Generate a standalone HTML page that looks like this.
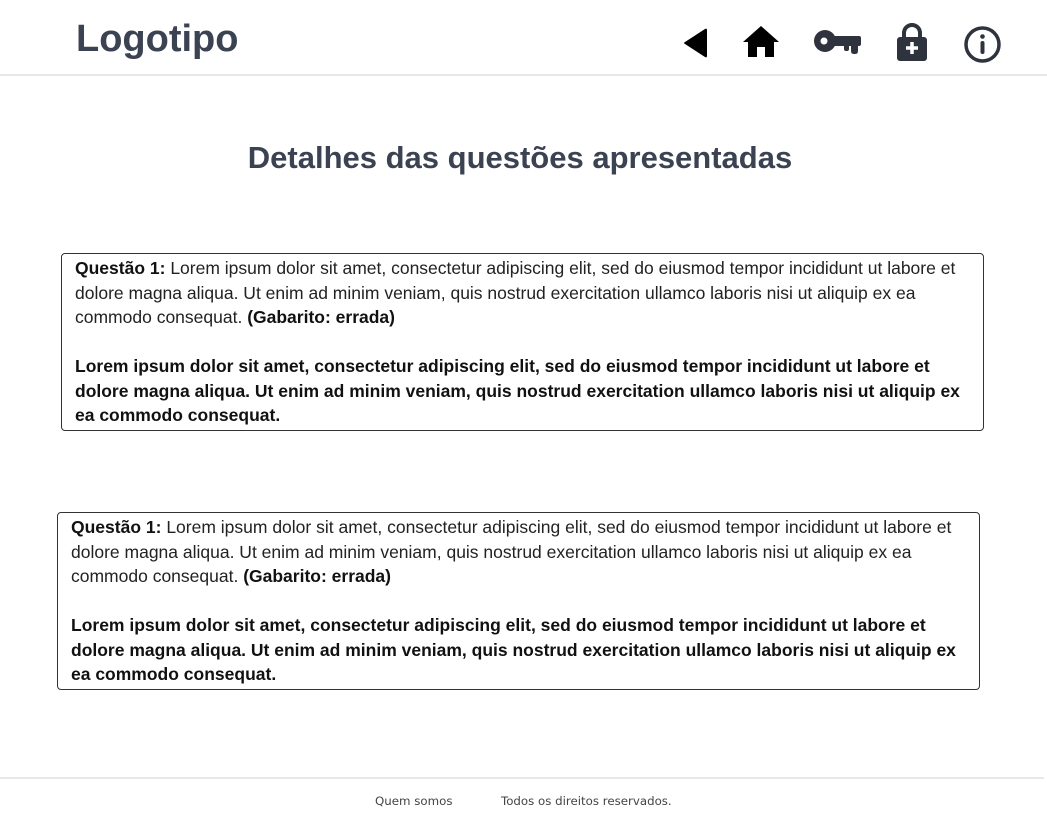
<!DOCTYPE html>
<html><head><meta charset="utf-8"><style>
*{margin:0;padding:0;box-sizing:border-box}
body{width:1047px;height:823px;background:#fff;font-family:"Liberation Sans",sans-serif;position:relative;overflow:hidden;color:#222}
.logo{position:absolute;left:76px;top:18px;font-size:38px;font-weight:bold;color:#3b4252;font-family:"Liberation Sans",sans-serif}
.hl{position:absolute;left:0;top:74px;width:1047px;height:2px;background:#e8e8e8}
.title{position:absolute;left:0;width:1040px;top:140px;text-align:center;font-size:31px;font-weight:bold;color:#3b4252;font-family:"Liberation Sans",sans-serif}
.box{position:absolute;width:923px;height:178px;border:1px solid #333;border-radius:4px;padding:2px 13px;font-size:17.5px;line-height:24.5px;color:#222;font-family:"Liberation Sans",sans-serif}
.box b{color:#111}
.icon{position:absolute}
.fl{position:absolute;left:0;top:777px;width:1044px;height:2px;background:#e8e8e8}
.ft{position:absolute;top:794px;font-size:11.8px;color:#444;font-family:"DejaVu Sans","Liberation Sans",sans-serif}
</style></head><body>
<div class="logo">Logotipo</div>
<svg class="icon" style="left:683px;top:28px" width="26" height="30" viewBox="0 0 26 30"><path d="M24 2 L24 28 Q24 30 22 29 L2 16 Q0 15 2 14 L22 1 Q24 0 24 2Z" fill="#000"/></svg>
<svg class="icon" style="left:742px;top:25px" width="38" height="33" viewBox="0 0 38 33"><path d="M19 1 L37 17 L32 17 L32 32 L23 32 L23 22 L15 22 L15 32 L6 32 L6 17 L1 17Z" fill="#000"/></svg>
<svg class="icon" style="left:813px;top:29px" width="48" height="26" viewBox="0 0 48 26"><circle cx="12" cy="12" r="11" fill="#2e333d"/><circle cx="11" cy="12" r="3.5" fill="#fff"/><path d="M18 7 H46 Q48 7 48 9 V15 Q48 17 46 17 H45 V22 Q45 25 42 25 H41 Q38 25 38 22 V17 H36 V20 Q36 22 34 22 H33 Q31 22 31 20 V17 H18Z" fill="#2e333d"/></svg>
<svg class="icon" style="left:897px;top:23px" width="30" height="38" viewBox="0 0 30 38"><path d="M7 15 V10 A8 8 0 0 1 23 10 V15" stroke="#2e333d" stroke-width="4" fill="none"/><rect x="0" y="14" width="30" height="24" rx="3" fill="#2e333d"/><path d="M15 19 V31 M9 25 H21" stroke="#fff" stroke-width="3.5"/></svg>
<svg class="icon" style="left:963px;top:25px" width="39" height="39" viewBox="0 0 39 39"><circle cx="19.5" cy="19.5" r="16.5" stroke="#2e333d" stroke-width="3.5" fill="none"/><circle cx="19.5" cy="11.5" r="2.3" fill="#2e333d"/><rect x="17.5" y="16" width="4" height="13" rx="2" fill="#2e333d"/></svg>
<div class="hl"></div>
<div class="title">Detalhes das questões apresentadas</div>
<div class="box" style="left:61px;top:253px"><b>Questão 1:</b> Lorem ipsum dolor sit amet, consectetur adipiscing elit, sed do eiusmod tempor incididunt ut labore et dolore magna aliqua. Ut enim ad minim veniam, quis nostrud exercitation ullamco laboris nisi ut aliquip ex ea commodo consequat. <b>(Gabarito: errada)</b><br><br><b>Lorem ipsum dolor sit amet, consectetur adipiscing elit, sed do eiusmod tempor incididunt ut labore et dolore magna aliqua. Ut enim ad minim veniam, quis nostrud exercitation ullamco laboris nisi ut aliquip ex ea commodo consequat.</b></div>
<div class="box" style="left:57px;top:512px"><b>Questão 1:</b> Lorem ipsum dolor sit amet, consectetur adipiscing elit, sed do eiusmod tempor incididunt ut labore et dolore magna aliqua. Ut enim ad minim veniam, quis nostrud exercitation ullamco laboris nisi ut aliquip ex ea commodo consequat. <b>(Gabarito: errada)</b><br><br><b>Lorem ipsum dolor sit amet, consectetur adipiscing elit, sed do eiusmod tempor incididunt ut labore et dolore magna aliqua. Ut enim ad minim veniam, quis nostrud exercitation ullamco laboris nisi ut aliquip ex ea commodo consequat.</b></div>
<div class="fl"></div>
<div class="ft" style="left:375px">Quem somos</div>
<div class="ft" style="left:501px">Todos os direitos reservados.</div>
</body></html>
